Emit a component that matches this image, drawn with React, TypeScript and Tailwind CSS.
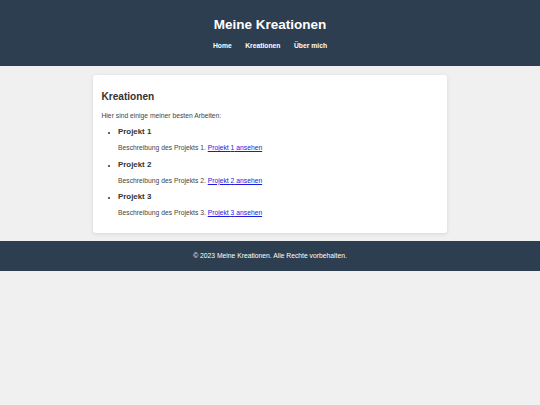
const projects = [1, 2, 3];

export default function App() {
  return (
    <div className="min-h-[405px] bg-[#f0f0f0] font-['Liberation_Sans',Arial,sans-serif] text-[#333]">
      <header className="flex h-[66px] flex-col items-center bg-[#2c3e50] pt-[17px] text-white">
        <h1 className="text-[13.5px] font-bold leading-[16px]">Meine Kreationen</h1>
        <nav className="mt-[8.5px] flex gap-[13.5px] text-[6.75px] font-bold leading-[8px]">
          <a href="#">Home</a>
          <a href="#">Kreationen</a>
          <a href="#">Über mich</a>
        </nav>
      </header>

      <main className="mx-auto mt-[8.5px] w-[354px] rounded-[3px] bg-white px-[8.5px] pb-[15.5px] pt-[8.5px] shadow-[0_1px_4px_rgba(0,0,0,0.1)]">
        <h2 className="mt-[8px] text-[10.1px] font-bold leading-[12px]">Kreationen</h2>
        <p className="mt-[8.5px] text-[6.75px] leading-[8px] text-[#444]">Hier sind einige meiner besten Arbeiten:</p>
        <ul className="list-disc pl-[16.5px] marker:text-[6px]">
          {projects.map((n) => (
            <li key={n} className="mt-[7.75px]">
              <h3 className="text-[7.9px] font-bold leading-[9px]">Projekt {n}</h3>
              <p className="mt-[7.75px] text-[6.75px] leading-[8px] text-[#444]">
                Beschreibung des Projekts {n}.{" "}
                <a href="#" className="text-[#1a1ae0] underline">
                  Projekt {n} ansehen
                </a>
              </p>
            </li>
          ))}
        </ul>
      </main>

      <footer className="mt-[8.5px] flex h-[29.5px] items-center justify-center bg-[#2c3e50] text-[6.75px] leading-[8px] text-white">
        © 2023 Meine Kreationen. Alle Rechte vorbehalten.
      </footer>
    </div>
  );
}
